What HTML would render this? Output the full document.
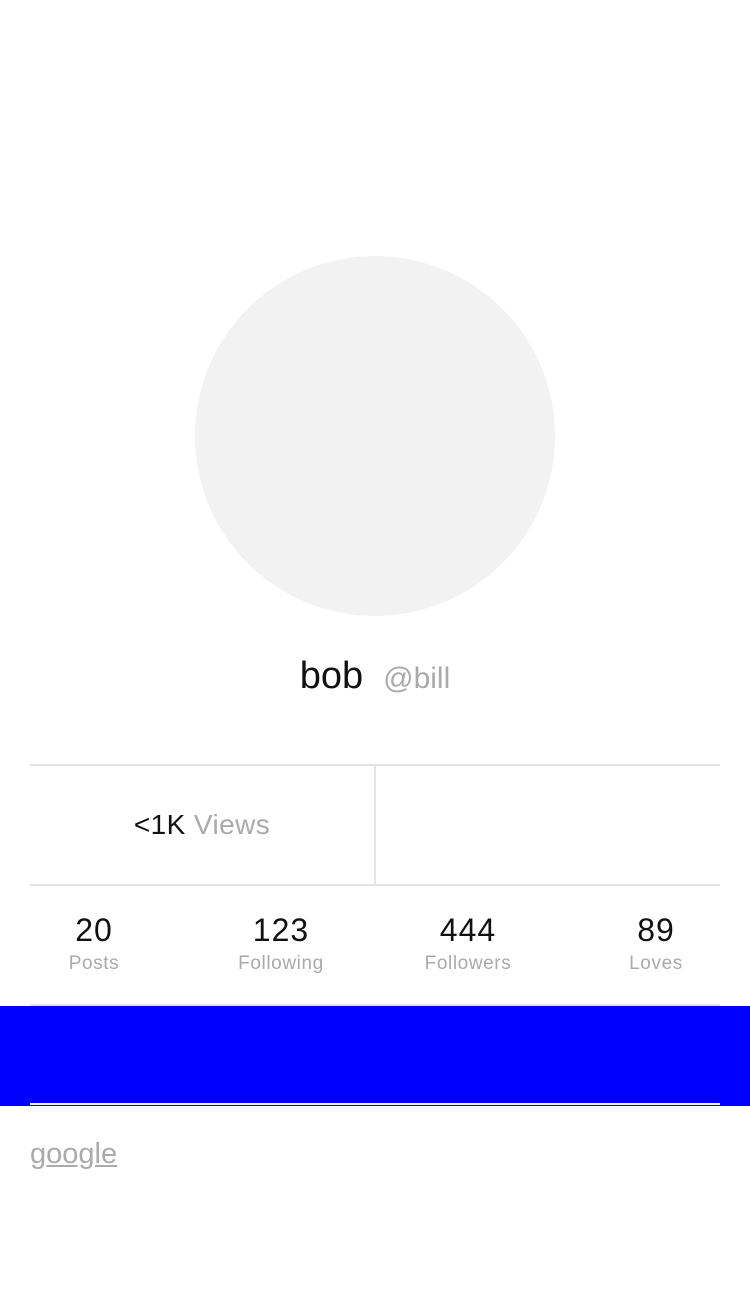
<!DOCTYPE html>
<html><head><meta charset="utf-8"><style>
*{margin:0;padding:0;box-sizing:border-box}
body{width:750px;height:1306px;background:#fff;font-family:"Liberation Sans",sans-serif;position:relative;overflow:hidden}
.a{position:absolute}
.c{text-align:center}
.n{font-size:32px;line-height:36px;color:#111;letter-spacing:1px}
.l{font-size:19px;line-height:24px;color:#aaa;letter-spacing:.6px;margin-top:4px}
</style></head><body>
<div class="a" style="left:195px;top:256px;width:360px;height:360px;border-radius:50%;background:#f2f2f2"></div>
<div class="a c" style="left:0;width:750px;top:652px;line-height:48px;white-space:nowrap"><span style="font-size:38px;color:#111">bob</span><span style="font-size:30px;color:#aaa;margin-left:20px">@bill</span></div>
<div class="a" style="left:30px;width:690px;top:764px;height:2px;background:#e3e3e3"></div>
<div class="a" style="left:374px;width:2px;top:766px;height:118px;background:#e3e3e3"></div>
<div class="a" style="left:30px;width:690px;top:884px;height:2px;background:#e3e3e3"></div>
<div class="a c" style="left:30px;width:344px;top:808px;font-size:28px;line-height:34px;white-space:nowrap;letter-spacing:.4px"><span style="color:#111">&lt;1K</span> <span style="color:#aaa">Views</span></div>
<div class="a c" style="left:0;width:188px;top:912px"><div class="n">20</div><div class="l">Posts</div></div>
<div class="a c" style="left:187px;width:188px;top:912px"><div class="n">123</div><div class="l">Following</div></div>
<div class="a c" style="left:374px;width:188px;top:912px"><div class="n">444</div><div class="l">Followers</div></div>
<div class="a c" style="left:562px;width:188px;top:912px"><div class="n">89</div><div class="l">Loves</div></div>
<div class="a" style="left:30px;width:690px;top:1004px;height:2px;background:#e3e3e3"></div>
<div class="a" style="left:0;width:750px;top:1006px;height:100px;background:#0000ff"></div>
<div class="a" style="left:30px;width:690px;top:1103px;height:2px;background:#f0f0f0"></div>
<div class="a" style="left:30px;top:1136px;font-size:29px;line-height:36px;color:#aaa;text-decoration:underline">google</div>
</body></html>
